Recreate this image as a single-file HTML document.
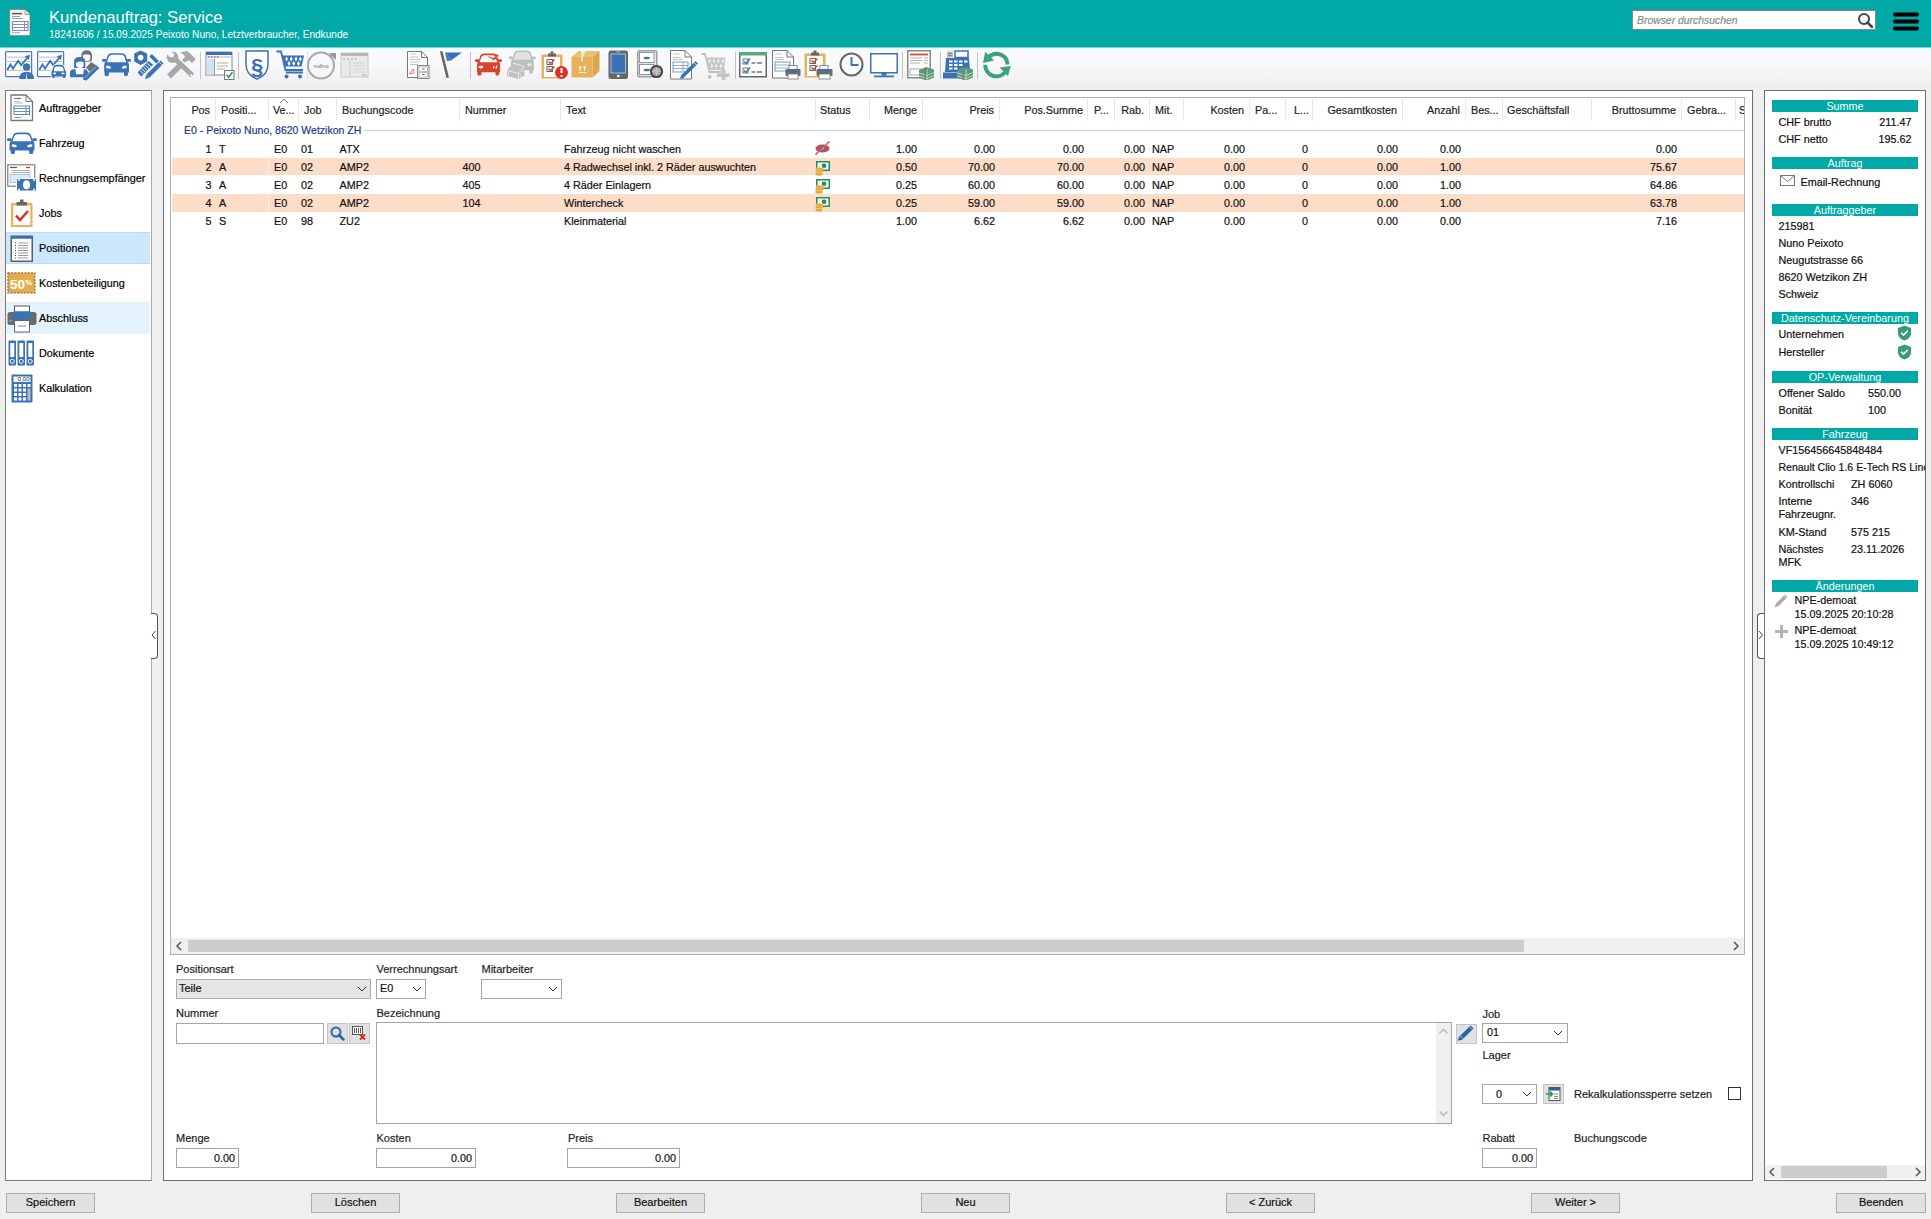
<!DOCTYPE html><html><head><meta charset="utf-8"><style>
html,body{margin:0;padding:0;width:1931px;height:1219px;overflow:hidden;background:#f0eff0;font-family:"Liberation Sans", sans-serif}
.a{position:absolute}
.t{position:absolute;white-space:nowrap;-webkit-text-stroke:0.2px currentColor}
</style></head><body>
<div class="a" style="left:0px;top:0px;width:1931px;height:47px;background:#00a9a5"></div>
<svg class="a" style="left:9px;top:9px" width="22" height="27" viewBox="0 0 22 27"><path d="M0.75 0.5H16L21 5.5V26.4H0.75Z" fill="#fff" stroke="#7a6a6a" stroke-width="0.6"/>
<path d="M16 0.5V5.5H21" fill="#e4e4e4" stroke="#888" stroke-width="0.8"/>
<rect x="3" y="3.8" width="10" height="1.6" fill="#555"/>
<rect x="3" y="7" width="8" height="1" fill="#999"/><rect x="3" y="9" width="11" height="1" fill="#999"/>
<rect x="3.5" y="12.5" width="15.5" height="9" fill="#fff" stroke="#7f8fb5" stroke-width="1.2"/>
<path d="M3.5 15.5H19M3.5 18.5H19M15.5 12.5V21.5" stroke="#7f8fb5" stroke-width="1"/>
<rect x="3" y="23.2" width="8" height="1" fill="#aaa"/></svg>
<div class="t" style="left:49px;top:10px;font-size:16.6px;line-height:16.6px;color:#fff;-webkit-text-stroke:0">Kundenauftrag: Service</div>
<div class="t" style="left:49px;top:30px;font-size:10.1px;line-height:10.1px;color:#fff;-webkit-text-stroke:0">18241606 / 15.09.2025 Peixoto Nuno, Letztverbraucher, Endkunde</div>
<div class="a" style="left:1632px;top:10px;width:244px;height:20px;background:#fff;border:1px solid #888;box-sizing:border-box"></div>
<div class="t" style="left:1637px;top:16px;font-size:10.4px;line-height:10.4px;color:#8a8a8a;font-style:italic">Browser durchsuchen</div>
<svg class="a" style="left:1857px;top:12px" width="17" height="16" viewBox="0 0 17 16"><circle cx="7" cy="7" r="5" fill="none" stroke="#444" stroke-width="2"/><path d="M10.5 10.5l4.5 4.5" stroke="#444" stroke-width="2.5" stroke-linecap="round"/></svg>
<svg class="a" style="left:1892px;top:11px" width="29" height="22" viewBox="0 0 29 22"><g stroke="#000" stroke-width="4" stroke-linecap="round"><path d="M3 3.5h22M3 10.5h22M3 17.5h22"/></g></svg>
<div class="a" style="left:0px;top:47px;width:1931px;height:43px;background:linear-gradient(#fbfafd,#f8f7f9 40%,#f3f2f4 75%,#eeedef)"></div>
<div class="a" style="left:0px;top:47px;width:1931px;height:1px;background:#7fcfcb"></div>
<div class="a" style="left:0px;top:48px;width:1931px;height:1px;background:#e6fdfb"></div>
<div class="a" style="left:0px;top:90px;width:1931px;height:1129px;background:#f0eff0"></div>
<div class="a" style="left:5px;top:90px;width:147px;height:1091px;background:#fff;border:1px solid #7c7c7c;border-right-color:#a9a9ab;box-sizing:border-box"></div>
<div class="a" style="left:163px;top:90px;width:1590px;height:1091px;background:#fff;border:1px solid #6e6e6e;box-sizing:border-box"></div>
<div class="a" style="left:1764px;top:90px;width:162px;height:1091px;background:#fff;border:1px solid #6e6e6e;box-sizing:border-box"></div>
<div class="a" style="left:152px;top:90px;width:11px;height:1091px;background:#f0eff0"></div>
<div class="a" style="left:6px;top:232px;width:144px;height:32px;background:#cce8ff;border-top:1px solid #b6dcf8;border-bottom:1px solid #b6dcf8;box-sizing:border-box"></div>
<div class="a" style="left:6px;top:302px;width:144px;height:32px;background:#e5f3ff"></div>
<div class="t" style="left:39px;top:103px;font-size:10.8px;line-height:10.8px;color:#000;">Auftraggeber</div>
<div class="t" style="left:39px;top:138px;font-size:10.8px;line-height:10.8px;color:#000;">Fahrzeug</div>
<div class="t" style="left:39px;top:173px;font-size:10.8px;line-height:10.8px;color:#000;">Rechnungsempfänger</div>
<div class="t" style="left:39px;top:208px;font-size:10.8px;line-height:10.8px;color:#000;">Jobs</div>
<div class="t" style="left:39px;top:243px;font-size:10.8px;line-height:10.8px;color:#000;">Positionen</div>
<div class="t" style="left:39px;top:278px;font-size:10.8px;line-height:10.8px;color:#000;">Kostenbeteiligung</div>
<div class="t" style="left:39px;top:313px;font-size:10.8px;line-height:10.8px;color:#000;">Abschluss</div>
<div class="t" style="left:39px;top:348px;font-size:10.8px;line-height:10.8px;color:#000;">Dokumente</div>
<div class="t" style="left:39px;top:383px;font-size:10.8px;line-height:10.8px;color:#000;">Kalkulation</div>
<div class="a" style="left:170px;top:97px;width:1575px;height:858px;border:1px solid #b2b2b4;box-sizing:border-box;background:#fff"></div>
<div class="a" style="left:215px;top:99px;width:1px;height:22px;background:#e8e8e8"></div>
<div class="a" style="left:268px;top:99px;width:1px;height:22px;background:#e8e8e8"></div>
<div class="a" style="left:298px;top:99px;width:1px;height:22px;background:#e8e8e8"></div>
<div class="a" style="left:336px;top:99px;width:1px;height:22px;background:#e8e8e8"></div>
<div class="a" style="left:459px;top:99px;width:1px;height:22px;background:#e8e8e8"></div>
<div class="a" style="left:560px;top:99px;width:1px;height:22px;background:#e8e8e8"></div>
<div class="a" style="left:815px;top:99px;width:1px;height:22px;background:#e8e8e8"></div>
<div class="a" style="left:869px;top:99px;width:1px;height:22px;background:#e8e8e8"></div>
<div class="a" style="left:922px;top:99px;width:1px;height:22px;background:#e8e8e8"></div>
<div class="a" style="left:999px;top:99px;width:1px;height:22px;background:#e8e8e8"></div>
<div class="a" style="left:1087px;top:99px;width:1px;height:22px;background:#e8e8e8"></div>
<div class="a" style="left:1114px;top:99px;width:1px;height:22px;background:#e8e8e8"></div>
<div class="a" style="left:1149px;top:99px;width:1px;height:22px;background:#e8e8e8"></div>
<div class="a" style="left:1183px;top:99px;width:1px;height:22px;background:#e8e8e8"></div>
<div class="a" style="left:1249px;top:99px;width:1px;height:22px;background:#e8e8e8"></div>
<div class="a" style="left:1285px;top:99px;width:1px;height:22px;background:#e8e8e8"></div>
<div class="a" style="left:1312px;top:99px;width:1px;height:22px;background:#e8e8e8"></div>
<div class="a" style="left:1402px;top:99px;width:1px;height:22px;background:#e8e8e8"></div>
<div class="a" style="left:1465px;top:99px;width:1px;height:22px;background:#e8e8e8"></div>
<div class="a" style="left:1502px;top:99px;width:1px;height:22px;background:#e8e8e8"></div>
<div class="a" style="left:1591px;top:99px;width:1px;height:22px;background:#e8e8e8"></div>
<div class="a" style="left:1681px;top:99px;width:1px;height:22px;background:#e8e8e8"></div>
<div class="a" style="left:1735px;top:99px;width:1px;height:22px;background:#e8e8e8"></div>
<div class="t" style="left:-190px;width:400px;text-align:right;top:105px;font-size:10.8px;line-height:10.8px;color:#1e1e1e;">Pos</div>
<div class="t" style="left:221px;top:105px;font-size:10.8px;line-height:10.8px;color:#1e1e1e;">Positi...</div>
<div class="t" style="left:273px;top:105px;font-size:10.8px;line-height:10.8px;color:#1e1e1e;">Ve...</div>
<div class="t" style="left:304px;top:105px;font-size:10.8px;line-height:10.8px;color:#1e1e1e;">Job</div>
<div class="t" style="left:342px;top:105px;font-size:10.8px;line-height:10.8px;color:#1e1e1e;">Buchungscode</div>
<div class="t" style="left:465px;top:105px;font-size:10.8px;line-height:10.8px;color:#1e1e1e;">Nummer</div>
<div class="t" style="left:566px;top:105px;font-size:10.8px;line-height:10.8px;color:#1e1e1e;">Text</div>
<div class="t" style="left:820px;top:105px;font-size:10.8px;line-height:10.8px;color:#1e1e1e;">Status</div>
<div class="t" style="left:517px;width:400px;text-align:right;top:105px;font-size:10.8px;line-height:10.8px;color:#1e1e1e;">Menge</div>
<div class="t" style="left:594px;width:400px;text-align:right;top:105px;font-size:10.8px;line-height:10.8px;color:#1e1e1e;">Preis</div>
<div class="t" style="left:683px;width:400px;text-align:right;top:105px;font-size:10.8px;line-height:10.8px;color:#1e1e1e;">Pos.Summe</div>
<div class="t" style="left:1094px;top:105px;font-size:10.8px;line-height:10.8px;color:#1e1e1e;">P...</div>
<div class="t" style="left:744px;width:400px;text-align:right;top:105px;font-size:10.8px;line-height:10.8px;color:#1e1e1e;">Rab.</div>
<div class="t" style="left:1155px;top:105px;font-size:10.8px;line-height:10.8px;color:#1e1e1e;">Mit.</div>
<div class="t" style="left:844px;width:400px;text-align:right;top:105px;font-size:10.8px;line-height:10.8px;color:#1e1e1e;">Kosten</div>
<div class="t" style="left:1255px;top:105px;font-size:10.8px;line-height:10.8px;color:#1e1e1e;">Pa...</div>
<div class="t" style="left:1294px;top:105px;font-size:10.8px;line-height:10.8px;color:#1e1e1e;">L...</div>
<div class="t" style="left:997px;width:400px;text-align:right;top:105px;font-size:10.8px;line-height:10.8px;color:#1e1e1e;">Gesamtkosten</div>
<div class="t" style="left:1060px;width:400px;text-align:right;top:105px;font-size:10.8px;line-height:10.8px;color:#1e1e1e;">Anzahl</div>
<div class="t" style="left:1471px;top:105px;font-size:10.8px;line-height:10.8px;color:#1e1e1e;">Bes...</div>
<div class="t" style="left:1507px;top:105px;font-size:10.8px;line-height:10.8px;color:#1e1e1e;">Geschäftsfall</div>
<div class="t" style="left:1276px;width:400px;text-align:right;top:105px;font-size:10.8px;line-height:10.8px;color:#1e1e1e;">Bruttosumme</div>
<div class="t" style="left:1687px;top:105px;font-size:10.8px;line-height:10.8px;color:#1e1e1e;">Gebra...</div>
<div class="a" style="left:1739px;top:100px;width:5px;height:20px;overflow:hidden">
<div class="t" style="left:0px;top:5px;font-size:10.8px;line-height:10.8px;color:#1e1e1e;">S</div>
</div>
<svg class="a" style="left:279px;top:98px" width="10" height="6" viewBox="0 0 10 6"><path d="M1 5l4-4 4 4" fill="none" stroke="#777" stroke-width="1"/></svg>
<div class="t" style="left:184px;top:125px;font-size:10.5px;line-height:10.5px;color:#1b3a8c;">E0 - Peixoto Nuno, 8620 Wetzikon ZH</div>
<div class="a" style="left:364px;top:130px;width:1380px;height:1px;background:#ccd3de"></div>
<div class="a" style="left:172px;top:158px;width:1572px;height:17px;background:#fddcc8"></div>
<div class="a" style="left:268px;top:158px;width:1px;height:17px;background:#fff3ec"></div>
<div class="a" style="left:172px;top:194px;width:1572px;height:18px;background:#fddcc8"></div>
<div class="a" style="left:268px;top:194px;width:1px;height:18px;background:#fff3ec"></div>
<div class="t" style="left:-188.5px;width:400px;text-align:right;top:144px;font-size:10.8px;line-height:10.8px;color:#111;">1</div>
<div class="t" style="left:219px;top:144px;font-size:10.8px;line-height:10.8px;color:#111;">T</div>
<div class="t" style="left:274px;top:144px;font-size:10.8px;line-height:10.8px;color:#111;">E0</div>
<div class="t" style="left:301px;top:144px;font-size:10.8px;line-height:10.8px;color:#111;">01</div>
<div class="t" style="left:339.5px;top:144px;font-size:10.8px;line-height:10.8px;color:#111;">ATX</div>
<div class="t" style="left:462.5px;top:144px;font-size:10.8px;line-height:10.8px;color:#111;"></div>
<div class="t" style="left:564px;top:144px;font-size:10.8px;line-height:10.8px;color:#111;">Fahrzeug nicht waschen</div>
<div class="t" style="left:517px;width:400px;text-align:right;top:144px;font-size:10.8px;line-height:10.8px;color:#111;">1.00</div>
<div class="t" style="left:595px;width:400px;text-align:right;top:144px;font-size:10.8px;line-height:10.8px;color:#111;">0.00</div>
<div class="t" style="left:684px;width:400px;text-align:right;top:144px;font-size:10.8px;line-height:10.8px;color:#111;">0.00</div>
<div class="t" style="left:745px;width:400px;text-align:right;top:144px;font-size:10.8px;line-height:10.8px;color:#111;">0.00</div>
<div class="t" style="left:1152px;top:144px;font-size:10.8px;line-height:10.8px;color:#111;">NAP</div>
<div class="t" style="left:845px;width:400px;text-align:right;top:144px;font-size:10.8px;line-height:10.8px;color:#111;">0.00</div>
<div class="t" style="left:908px;width:400px;text-align:right;top:144px;font-size:10.8px;line-height:10.8px;color:#111;">0</div>
<div class="t" style="left:998px;width:400px;text-align:right;top:144px;font-size:10.8px;line-height:10.8px;color:#111;">0.00</div>
<div class="t" style="left:1061px;width:400px;text-align:right;top:144px;font-size:10.8px;line-height:10.8px;color:#111;">0.00</div>
<div class="t" style="left:1277px;width:400px;text-align:right;top:144px;font-size:10.8px;line-height:10.8px;color:#111;">0.00</div>
<div class="t" style="left:-188.5px;width:400px;text-align:right;top:162px;font-size:10.8px;line-height:10.8px;color:#111;">2</div>
<div class="t" style="left:219px;top:162px;font-size:10.8px;line-height:10.8px;color:#111;">A</div>
<div class="t" style="left:274px;top:162px;font-size:10.8px;line-height:10.8px;color:#111;">E0</div>
<div class="t" style="left:301px;top:162px;font-size:10.8px;line-height:10.8px;color:#111;">02</div>
<div class="t" style="left:339.5px;top:162px;font-size:10.8px;line-height:10.8px;color:#111;">AMP2</div>
<div class="t" style="left:462.5px;top:162px;font-size:10.8px;line-height:10.8px;color:#111;">400</div>
<div class="t" style="left:564px;top:162px;font-size:10.8px;line-height:10.8px;color:#111;">4 Radwechsel inkl. 2 Räder auswuchten</div>
<div class="t" style="left:517px;width:400px;text-align:right;top:162px;font-size:10.8px;line-height:10.8px;color:#111;">0.50</div>
<div class="t" style="left:595px;width:400px;text-align:right;top:162px;font-size:10.8px;line-height:10.8px;color:#111;">70.00</div>
<div class="t" style="left:684px;width:400px;text-align:right;top:162px;font-size:10.8px;line-height:10.8px;color:#111;">70.00</div>
<div class="t" style="left:745px;width:400px;text-align:right;top:162px;font-size:10.8px;line-height:10.8px;color:#111;">0.00</div>
<div class="t" style="left:1152px;top:162px;font-size:10.8px;line-height:10.8px;color:#111;">NAP</div>
<div class="t" style="left:845px;width:400px;text-align:right;top:162px;font-size:10.8px;line-height:10.8px;color:#111;">0.00</div>
<div class="t" style="left:908px;width:400px;text-align:right;top:162px;font-size:10.8px;line-height:10.8px;color:#111;">0</div>
<div class="t" style="left:998px;width:400px;text-align:right;top:162px;font-size:10.8px;line-height:10.8px;color:#111;">0.00</div>
<div class="t" style="left:1061px;width:400px;text-align:right;top:162px;font-size:10.8px;line-height:10.8px;color:#111;">1.00</div>
<div class="t" style="left:1277px;width:400px;text-align:right;top:162px;font-size:10.8px;line-height:10.8px;color:#111;">75.67</div>
<div class="t" style="left:-188.5px;width:400px;text-align:right;top:180px;font-size:10.8px;line-height:10.8px;color:#111;">3</div>
<div class="t" style="left:219px;top:180px;font-size:10.8px;line-height:10.8px;color:#111;">A</div>
<div class="t" style="left:274px;top:180px;font-size:10.8px;line-height:10.8px;color:#111;">E0</div>
<div class="t" style="left:301px;top:180px;font-size:10.8px;line-height:10.8px;color:#111;">02</div>
<div class="t" style="left:339.5px;top:180px;font-size:10.8px;line-height:10.8px;color:#111;">AMP2</div>
<div class="t" style="left:462.5px;top:180px;font-size:10.8px;line-height:10.8px;color:#111;">405</div>
<div class="t" style="left:564px;top:180px;font-size:10.8px;line-height:10.8px;color:#111;">4 Räder Einlagern</div>
<div class="t" style="left:517px;width:400px;text-align:right;top:180px;font-size:10.8px;line-height:10.8px;color:#111;">0.25</div>
<div class="t" style="left:595px;width:400px;text-align:right;top:180px;font-size:10.8px;line-height:10.8px;color:#111;">60.00</div>
<div class="t" style="left:684px;width:400px;text-align:right;top:180px;font-size:10.8px;line-height:10.8px;color:#111;">60.00</div>
<div class="t" style="left:745px;width:400px;text-align:right;top:180px;font-size:10.8px;line-height:10.8px;color:#111;">0.00</div>
<div class="t" style="left:1152px;top:180px;font-size:10.8px;line-height:10.8px;color:#111;">NAP</div>
<div class="t" style="left:845px;width:400px;text-align:right;top:180px;font-size:10.8px;line-height:10.8px;color:#111;">0.00</div>
<div class="t" style="left:908px;width:400px;text-align:right;top:180px;font-size:10.8px;line-height:10.8px;color:#111;">0</div>
<div class="t" style="left:998px;width:400px;text-align:right;top:180px;font-size:10.8px;line-height:10.8px;color:#111;">0.00</div>
<div class="t" style="left:1061px;width:400px;text-align:right;top:180px;font-size:10.8px;line-height:10.8px;color:#111;">1.00</div>
<div class="t" style="left:1277px;width:400px;text-align:right;top:180px;font-size:10.8px;line-height:10.8px;color:#111;">64.86</div>
<div class="t" style="left:-188.5px;width:400px;text-align:right;top:198px;font-size:10.8px;line-height:10.8px;color:#111;">4</div>
<div class="t" style="left:219px;top:198px;font-size:10.8px;line-height:10.8px;color:#111;">A</div>
<div class="t" style="left:274px;top:198px;font-size:10.8px;line-height:10.8px;color:#111;">E0</div>
<div class="t" style="left:301px;top:198px;font-size:10.8px;line-height:10.8px;color:#111;">02</div>
<div class="t" style="left:339.5px;top:198px;font-size:10.8px;line-height:10.8px;color:#111;">AMP2</div>
<div class="t" style="left:462.5px;top:198px;font-size:10.8px;line-height:10.8px;color:#111;">104</div>
<div class="t" style="left:564px;top:198px;font-size:10.8px;line-height:10.8px;color:#111;">Wintercheck</div>
<div class="t" style="left:517px;width:400px;text-align:right;top:198px;font-size:10.8px;line-height:10.8px;color:#111;">0.25</div>
<div class="t" style="left:595px;width:400px;text-align:right;top:198px;font-size:10.8px;line-height:10.8px;color:#111;">59.00</div>
<div class="t" style="left:684px;width:400px;text-align:right;top:198px;font-size:10.8px;line-height:10.8px;color:#111;">59.00</div>
<div class="t" style="left:745px;width:400px;text-align:right;top:198px;font-size:10.8px;line-height:10.8px;color:#111;">0.00</div>
<div class="t" style="left:1152px;top:198px;font-size:10.8px;line-height:10.8px;color:#111;">NAP</div>
<div class="t" style="left:845px;width:400px;text-align:right;top:198px;font-size:10.8px;line-height:10.8px;color:#111;">0.00</div>
<div class="t" style="left:908px;width:400px;text-align:right;top:198px;font-size:10.8px;line-height:10.8px;color:#111;">0</div>
<div class="t" style="left:998px;width:400px;text-align:right;top:198px;font-size:10.8px;line-height:10.8px;color:#111;">0.00</div>
<div class="t" style="left:1061px;width:400px;text-align:right;top:198px;font-size:10.8px;line-height:10.8px;color:#111;">1.00</div>
<div class="t" style="left:1277px;width:400px;text-align:right;top:198px;font-size:10.8px;line-height:10.8px;color:#111;">63.78</div>
<div class="t" style="left:-188.5px;width:400px;text-align:right;top:216px;font-size:10.8px;line-height:10.8px;color:#111;">5</div>
<div class="t" style="left:219px;top:216px;font-size:10.8px;line-height:10.8px;color:#111;">S</div>
<div class="t" style="left:274px;top:216px;font-size:10.8px;line-height:10.8px;color:#111;">E0</div>
<div class="t" style="left:301px;top:216px;font-size:10.8px;line-height:10.8px;color:#111;">98</div>
<div class="t" style="left:339.5px;top:216px;font-size:10.8px;line-height:10.8px;color:#111;">ZU2</div>
<div class="t" style="left:462.5px;top:216px;font-size:10.8px;line-height:10.8px;color:#111;"></div>
<div class="t" style="left:564px;top:216px;font-size:10.8px;line-height:10.8px;color:#111;">Kleinmaterial</div>
<div class="t" style="left:517px;width:400px;text-align:right;top:216px;font-size:10.8px;line-height:10.8px;color:#111;">1.00</div>
<div class="t" style="left:595px;width:400px;text-align:right;top:216px;font-size:10.8px;line-height:10.8px;color:#111;">6.62</div>
<div class="t" style="left:684px;width:400px;text-align:right;top:216px;font-size:10.8px;line-height:10.8px;color:#111;">6.62</div>
<div class="t" style="left:745px;width:400px;text-align:right;top:216px;font-size:10.8px;line-height:10.8px;color:#111;">0.00</div>
<div class="t" style="left:1152px;top:216px;font-size:10.8px;line-height:10.8px;color:#111;">NAP</div>
<div class="t" style="left:845px;width:400px;text-align:right;top:216px;font-size:10.8px;line-height:10.8px;color:#111;">0.00</div>
<div class="t" style="left:908px;width:400px;text-align:right;top:216px;font-size:10.8px;line-height:10.8px;color:#111;">0</div>
<div class="t" style="left:998px;width:400px;text-align:right;top:216px;font-size:10.8px;line-height:10.8px;color:#111;">0.00</div>
<div class="t" style="left:1061px;width:400px;text-align:right;top:216px;font-size:10.8px;line-height:10.8px;color:#111;">0.00</div>
<div class="t" style="left:1277px;width:400px;text-align:right;top:216px;font-size:10.8px;line-height:10.8px;color:#111;">7.16</div>
<div class="a" style="left:171px;top:938px;width:1573px;height:16px;background:#f0f0f0"></div>
<div class="a" style="left:188px;top:940px;width:1336px;height:12px;background:#cdcdcd"></div>
<svg class="a" style="left:175px;top:941px" width="8" height="10" viewBox="0 0 8 10"><path d="M6 1L2 5l4 4" fill="none" stroke="#555" stroke-width="1.5"/></svg>
<svg class="a" style="left:1732px;top:941px" width="8" height="10" viewBox="0 0 8 10"><path d="M2 1l4 4-4 4" fill="none" stroke="#555" stroke-width="1.5"/></svg>
<div class="a" style="left:151px;top:613px;width:6px;height:44px;border:1px solid #555;border-left:none;border-radius:0 4px 4px 0;background:#fff"></div>
<svg class="a" style="left:151px;top:630px" width="6" height="10" viewBox="0 0 6 10"><path d="M4.5 1L1 5l3.5 4" fill="none" stroke="#444" stroke-width="1"/></svg>
<div class="a" style="left:1757px;top:613px;width:6px;height:44px;border:1px solid #555;border-right:none;border-radius:4px 0 0 4px;background:#fff"></div>
<svg class="a" style="left:1758px;top:630px" width="6" height="10" viewBox="0 0 6 10"><path d="M1 1l3.5 4L1 9" fill="none" stroke="#444" stroke-width="1"/></svg>
<div class="t" style="left:176px;top:964px;font-size:11px;line-height:11px;color:#1e1e1e;">Positionsart</div>
<div class="a" style="left:176px;top:979px;width:195px;height:20px;background:#e5e5e5;border:1px solid #adadad;box-sizing:border-box"></div>
<div class="t" style="left:179px;top:983px;font-size:11px;line-height:11px;color:#111;">Teile</div>
<svg class="a" style="left:357px;top:986px" width="10" height="6" viewBox="0 0 10 6"><path d="M1 1l4 4 4-4" fill="none" stroke="#333" stroke-width="1"/></svg>
<div class="t" style="left:376.5px;top:964px;font-size:11px;line-height:11px;color:#1e1e1e;">Verrechnungsart</div>
<div class="a" style="left:376px;top:979px;width:50px;height:20px;background:#fff;border:1px solid #a5a5a5;box-sizing:border-box;"></div>
<div class="t" style="left:380px;top:983px;font-size:10.8px;line-height:10.8px;color:#111;">E0</div>
<svg class="a" style="left:412px;top:986px" width="10" height="6" viewBox="0 0 10 6"><path d="M1 1l4 4 4-4" fill="none" stroke="#333" stroke-width="1"/></svg>
<div class="t" style="left:481.5px;top:964px;font-size:11px;line-height:11px;color:#1e1e1e;">Mitarbeiter</div>
<div class="a" style="left:481px;top:979px;width:81px;height:20px;background:#fff;border:1px solid #a5a5a5;box-sizing:border-box;"></div>
<svg class="a" style="left:548px;top:986px" width="10" height="6" viewBox="0 0 10 6"><path d="M1 1l4 4 4-4" fill="none" stroke="#333" stroke-width="1"/></svg>
<div class="t" style="left:176px;top:1008px;font-size:11px;line-height:11px;color:#1e1e1e;">Nummer</div>
<div class="a" style="left:176px;top:1023px;width:148px;height:21px;background:#fff;border:1px solid #a5a5a5;box-sizing:border-box;"></div>
<div class="a" style="left:327px;top:1023px;width:21px;height:21px;background:#e1e1e1;border:1px solid #c5c5c5;box-sizing:border-box"></div>
<svg class="a" style="left:329px;top:1025px" width="17" height="17" viewBox="0 0 17 17"><circle cx="7" cy="7" r="4.5" fill="none" stroke="#2a64a8" stroke-width="2"/><path d="M10 10l4.5 4.5" stroke="#2a64a8" stroke-width="2.5" stroke-linecap="round"/></svg>
<div class="a" style="left:349px;top:1023px;width:21px;height:21px;background:#e1e1e1;border:1px solid #c5c5c5;box-sizing:border-box"></div>
<svg class="a" style="left:351px;top:1025px" width="17" height="17" viewBox="0 0 17 17"><rect x="1.5" y="1.5" width="10" height="8" fill="#fff" stroke="#555"/><path d="M3.5 3v5M5.5 3v5M7.5 3v5M9.5 3v5" stroke="#555"/><path d="M9 9.5l5 5M14 9.5l-5 5" stroke="#d22" stroke-width="1.8"/></svg>
<div class="t" style="left:376.5px;top:1008px;font-size:11px;line-height:11px;color:#1e1e1e;">Bezeichnung</div>
<div class="a" style="left:376px;top:1022px;width:1076px;height:102px;background:#fff;border:1px solid #a5a5a5;box-sizing:border-box;"></div>
<div class="a" style="left:1436px;top:1023px;width:15px;height:100px;background:#f0eff1"></div>
<svg class="a" style="left:1438px;top:1027px" width="11" height="8" viewBox="0 0 11 8"><path d="M1.5 6.5l4-4 4 4" fill="none" stroke="#bdbdbd" stroke-width="1.6"/></svg>
<svg class="a" style="left:1438px;top:1110px" width="11" height="8" viewBox="0 0 11 8"><path d="M1.5 1.5l4 4 4-4" fill="none" stroke="#bdbdbd" stroke-width="1.6"/></svg>
<div class="a" style="left:1456px;top:1024px;width:21px;height:20px;background:#e1e1e1;border:1px solid #c5c5c5;box-sizing:border-box"></div>
<svg class="a" style="left:1456px;top:1024px" width="20" height="20" viewBox="0 0 20 20"><path d="M1.7 16.8L3.2 12.8L14.5 1.5L17.5 4.5L6.2 15.8Z" fill="#2a64a8"/><path d="M13.3 2.7l3 3M4.2 11.8l3 3" stroke="#e6eef8" stroke-width="0.7"/></svg>
<div class="t" style="left:1482.5px;top:1009px;font-size:11px;line-height:11px;color:#1e1e1e;">Job</div>
<div class="a" style="left:1482px;top:1023px;width:86px;height:20px;background:#fff;border:1px solid #a5a5a5;box-sizing:border-box;"></div>
<div class="t" style="left:1487px;top:1027px;font-size:10.8px;line-height:10.8px;color:#111;">01</div>
<svg class="a" style="left:1553px;top:1030px" width="10" height="6" viewBox="0 0 10 6"><path d="M1 1l4 4 4-4" fill="none" stroke="#333" stroke-width="1"/></svg>
<div class="t" style="left:1482.5px;top:1050px;font-size:11px;line-height:11px;color:#1e1e1e;">Lager</div>
<div class="a" style="left:1482px;top:1084px;width:55px;height:20px;background:#fff;border:1px solid #a5a5a5;box-sizing:border-box;"></div>
<div class="t" style="left:1496px;top:1089px;font-size:10.8px;line-height:10.8px;color:#111;">0</div>
<svg class="a" style="left:1522px;top:1091px" width="10" height="6" viewBox="0 0 10 6"><path d="M1 1l4 4 4-4" fill="none" stroke="#333" stroke-width="1"/></svg>
<div class="a" style="left:1543px;top:1084px;width:21px;height:20px;background:#e1e1e1;border:1px solid #c5c5c5;box-sizing:border-box"></div>
<svg class="a" style="left:1545px;top:1086px" width="17" height="16" viewBox="0 0 17 16"><rect x="4" y="1.5" width="11" height="13" fill="#fff" stroke="#555"/><rect x="4" y="1.5" width="11" height="3" fill="#2a64a8"/><path d="M1 8h6M5 5.5l2.5 2.5L5 10.5" fill="none" stroke="#1a9a5a" stroke-width="1.6"/><path d="M9 8h4M9 10.5h4M9 12.5h4" stroke="#888"/></svg>
<div class="t" style="left:1574px;top:1089px;font-size:11px;line-height:11px;color:#1e1e1e;">Rekalkulationssperre setzen</div>
<div class="a" style="left:1728px;top:1087px;width:13px;height:13px;background:#fff;border:1px solid #333;box-sizing:border-box"></div>
<div class="t" style="left:176px;top:1133px;font-size:11px;line-height:11px;color:#1e1e1e;">Menge</div>
<div class="a" style="left:176px;top:1148px;width:63px;height:20px;background:#fff;border:1px solid #a5a5a5;box-sizing:border-box;"></div>
<div class="t" style="left:-165px;width:400px;text-align:right;top:1153px;font-size:10.8px;line-height:10.8px;color:#111;">0.00</div>
<div class="t" style="left:376.5px;top:1133px;font-size:11px;line-height:11px;color:#1e1e1e;">Kosten</div>
<div class="a" style="left:376px;top:1148px;width:100px;height:20px;background:#fff;border:1px solid #a5a5a5;box-sizing:border-box;"></div>
<div class="t" style="left:72px;width:400px;text-align:right;top:1153px;font-size:10.8px;line-height:10.8px;color:#111;">0.00</div>
<div class="t" style="left:568px;top:1133px;font-size:11px;line-height:11px;color:#1e1e1e;">Preis</div>
<div class="a" style="left:567px;top:1148px;width:113px;height:20px;background:#fff;border:1px solid #a5a5a5;box-sizing:border-box;"></div>
<div class="t" style="left:276px;width:400px;text-align:right;top:1153px;font-size:10.8px;line-height:10.8px;color:#111;">0.00</div>
<div class="t" style="left:1482.5px;top:1133px;font-size:11px;line-height:11px;color:#1e1e1e;">Rabatt</div>
<div class="a" style="left:1482px;top:1148px;width:55px;height:20px;background:#fff;border:1px solid #a5a5a5;box-sizing:border-box;"></div>
<div class="t" style="left:1133px;width:400px;text-align:right;top:1153px;font-size:10.8px;line-height:10.8px;color:#111;">0.00</div>
<div class="t" style="left:1574px;top:1133px;font-size:11px;line-height:11px;color:#1e1e1e;">Buchungscode</div>
<div class="a" style="left:6px;top:1193px;width:89px;height:20px;background:#e1e1e1;border:1px solid #adadad;box-sizing:border-box"></div>
<div class="t" style="left:-9.5px;width:120px;text-align:center;top:1197px;font-size:11px;line-height:11px;color:#111;">Speichern</div>
<div class="a" style="left:311px;top:1193px;width:89px;height:20px;background:#e1e1e1;border:1px solid #adadad;box-sizing:border-box"></div>
<div class="t" style="left:295.5px;width:120px;text-align:center;top:1197px;font-size:11px;line-height:11px;color:#111;">Löschen</div>
<div class="a" style="left:616px;top:1193px;width:89px;height:20px;background:#e1e1e1;border:1px solid #adadad;box-sizing:border-box"></div>
<div class="t" style="left:600.5px;width:120px;text-align:center;top:1197px;font-size:11px;line-height:11px;color:#111;">Bearbeiten</div>
<div class="a" style="left:921px;top:1193px;width:89px;height:20px;background:#e1e1e1;border:1px solid #adadad;box-sizing:border-box"></div>
<div class="t" style="left:905.5px;width:120px;text-align:center;top:1197px;font-size:11px;line-height:11px;color:#111;">Neu</div>
<div class="a" style="left:1226px;top:1193px;width:89px;height:20px;background:#e1e1e1;border:1px solid #adadad;box-sizing:border-box"></div>
<div class="t" style="left:1210.5px;width:120px;text-align:center;top:1197px;font-size:11px;line-height:11px;color:#111;">&lt; Zurück</div>
<div class="a" style="left:1531px;top:1193px;width:89px;height:20px;background:#e1e1e1;border:1px solid #adadad;box-sizing:border-box"></div>
<div class="t" style="left:1515.5px;width:120px;text-align:center;top:1197px;font-size:11px;line-height:11px;color:#111;">Weiter &gt;</div>
<div class="a" style="left:1836px;top:1193px;width:90px;height:20px;background:#e1e1e1;border:1px solid #adadad;box-sizing:border-box"></div>
<div class="t" style="left:1821.0px;width:120px;text-align:center;top:1197px;font-size:11px;line-height:11px;color:#111;">Beenden</div>
<div class="a" style="left:1772px;top:100px;width:146px;height:12px;background:#00a9a5"></div>
<div class="t" style="left:1765.0px;width:160px;text-align:center;top:101px;font-size:10.8px;line-height:10.8px;color:#fff;-webkit-text-stroke:0">Summe</div>
<div class="t" style="left:1778.5px;top:117px;font-size:10.8px;line-height:10.8px;color:#111;">CHF brutto</div>
<div class="t" style="left:1511.5px;width:400px;text-align:right;top:117px;font-size:10.8px;line-height:10.8px;color:#111;">211.47</div>
<div class="t" style="left:1778.5px;top:134px;font-size:10.8px;line-height:10.8px;color:#111;">CHF netto</div>
<div class="t" style="left:1511.5px;width:400px;text-align:right;top:134px;font-size:10.8px;line-height:10.8px;color:#111;">195.62</div>
<div class="a" style="left:1772px;top:157px;width:146px;height:12px;background:#00a9a5"></div>
<div class="t" style="left:1765.0px;width:160px;text-align:center;top:158px;font-size:10.8px;line-height:10.8px;color:#fff;-webkit-text-stroke:0">Auftrag</div>
<svg class="a" style="left:1780px;top:175px" width="16" height="12" viewBox="0 0 16 12"><rect x="0.5" y="0.5" width="14" height="10" fill="#fff" stroke="#777"/><path d="M0.5 0.5l7 6 7-6" fill="none" stroke="#777"/></svg>
<div class="t" style="left:1800.5px;top:177px;font-size:10.8px;line-height:10.8px;color:#111;">Email-Rechnung</div>
<div class="a" style="left:1772px;top:204px;width:146px;height:12px;background:#00a9a5"></div>
<div class="t" style="left:1765.0px;width:160px;text-align:center;top:205px;font-size:10.8px;line-height:10.8px;color:#fff;-webkit-text-stroke:0">Auftraggeber</div>
<div class="t" style="left:1778.5px;top:221px;font-size:10.8px;line-height:10.8px;color:#111;">215981</div>
<div class="t" style="left:1778.5px;top:238px;font-size:10.8px;line-height:10.8px;color:#111;">Nuno Peixoto</div>
<div class="t" style="left:1778.5px;top:255px;font-size:10.8px;line-height:10.8px;color:#111;">Neugutstrasse 66</div>
<div class="t" style="left:1778.5px;top:272px;font-size:10.8px;line-height:10.8px;color:#111;">8620 Wetzikon ZH</div>
<div class="t" style="left:1778.5px;top:289px;font-size:10.8px;line-height:10.8px;color:#111;">Schweiz</div>
<div class="a" style="left:1772px;top:312px;width:146px;height:12px;background:#00a9a5"></div>
<div class="t" style="left:1765.0px;width:160px;text-align:center;top:313px;font-size:10.8px;line-height:10.8px;color:#fff;-webkit-text-stroke:0">Datenschutz-Vereinbarung</div>
<div class="t" style="left:1778.5px;top:329px;font-size:10.8px;line-height:10.8px;color:#111;">Unternehmen</div>
<div class="t" style="left:1778.5px;top:347px;font-size:10.8px;line-height:10.8px;color:#111;">Hersteller</div>
<svg class="a" style="left:1897px;top:325px" width="15" height="16" viewBox="0 0 15 16"><path d="M7.5 0.5L14 3v5c0 4-3 6.5-6.5 7.5C4 14.5 1 12 1 8V3z" fill="#3b9a7a"/><path d="M4.2 7.8l2.3 2.3 4.3-4.3" fill="none" stroke="#fff" stroke-width="1.6"/></svg>
<svg class="a" style="left:1897px;top:344px" width="15" height="16" viewBox="0 0 15 16"><path d="M7.5 0.5L14 3v5c0 4-3 6.5-6.5 7.5C4 14.5 1 12 1 8V3z" fill="#3b9a7a"/><path d="M4.2 7.8l2.3 2.3 4.3-4.3" fill="none" stroke="#fff" stroke-width="1.6"/></svg>
<div class="a" style="left:1772px;top:371px;width:146px;height:12px;background:#00a9a5"></div>
<div class="t" style="left:1765.0px;width:160px;text-align:center;top:372px;font-size:10.8px;line-height:10.8px;color:#fff;-webkit-text-stroke:0">OP-Verwaltung</div>
<div class="t" style="left:1778.5px;top:388px;font-size:10.8px;line-height:10.8px;color:#111;">Offener Saldo</div>
<div class="t" style="left:1868px;top:388px;font-size:10.8px;line-height:10.8px;color:#111;">550.00</div>
<div class="t" style="left:1778.5px;top:405px;font-size:10.8px;line-height:10.8px;color:#111;">Bonität</div>
<div class="t" style="left:1868px;top:405px;font-size:10.8px;line-height:10.8px;color:#111;">100</div>
<div class="a" style="left:1772px;top:428px;width:146px;height:12px;background:#00a9a5"></div>
<div class="t" style="left:1765.0px;width:160px;text-align:center;top:429px;font-size:10.8px;line-height:10.8px;color:#fff;-webkit-text-stroke:0">Fahrzeug</div>
<div class="t" style="left:1778.5px;top:445px;font-size:10.8px;line-height:10.8px;color:#111;">VF156456645848484</div>
<div class="a" style="left:1778px;top:455px;width:147px;height:20px;overflow:hidden">
<div class="t" style="left:0.5px;top:7px;font-size:10.5px;line-height:10.5px;color:#111;">Renault Clio 1.6 E-Tech RS Line</div>
</div>
<div class="t" style="left:1778.5px;top:479px;font-size:10.8px;line-height:10.8px;color:#111;">Kontrollschi</div>
<div class="t" style="left:1851px;top:479px;font-size:10.8px;line-height:10.8px;color:#111;">ZH 6060</div>
<div class="t" style="left:1778.5px;top:496px;font-size:10.8px;line-height:10.8px;color:#111;">Interne</div>
<div class="t" style="left:1851px;top:496px;font-size:10.8px;line-height:10.8px;color:#111;">346</div>
<div class="t" style="left:1778.5px;top:509px;font-size:10.8px;line-height:10.8px;color:#111;">Fahrzeugnr.</div>
<div class="t" style="left:1778.5px;top:527px;font-size:10.8px;line-height:10.8px;color:#111;">KM-Stand</div>
<div class="t" style="left:1851px;top:527px;font-size:10.8px;line-height:10.8px;color:#111;">575 215</div>
<div class="t" style="left:1778.5px;top:544px;font-size:10.8px;line-height:10.8px;color:#111;">Nächstes</div>
<div class="t" style="left:1851px;top:544px;font-size:10.8px;line-height:10.8px;color:#111;">23.11.2026</div>
<div class="t" style="left:1778.5px;top:557px;font-size:10.8px;line-height:10.8px;color:#111;">MFK</div>
<div class="a" style="left:1772px;top:580px;width:146px;height:12px;background:#00a9a5"></div>
<div class="t" style="left:1765.0px;width:160px;text-align:center;top:581px;font-size:10.8px;line-height:10.8px;color:#fff;-webkit-text-stroke:0">Änderungen</div>
<svg class="a" style="left:1773px;top:593px" width="16" height="16" viewBox="0 0 16 16"><path d="M1.5 14.5l1.5-4 9-9 2.5 2.5-9 9z" fill="#aaa"/><path d="M11 2.5l2.5 2.5" stroke="#fff" stroke-width="0.8"/></svg>
<div class="t" style="left:1794.5px;top:595px;font-size:10.8px;line-height:10.8px;color:#111;">NPE-demoat</div>
<div class="t" style="left:1794.5px;top:609px;font-size:10.8px;line-height:10.8px;color:#111;">15.09.2025 20:10:28</div>
<svg class="a" style="left:1775px;top:625px" width="13" height="13" viewBox="0 0 13 13"><path d="M6.5 0v13M0 6.5h13" stroke="#b5b5b5" stroke-width="3"/></svg>
<div class="t" style="left:1794.5px;top:625px;font-size:10.8px;line-height:10.8px;color:#111;">NPE-demoat</div>
<div class="t" style="left:1794.5px;top:639px;font-size:10.8px;line-height:10.8px;color:#111;">15.09.2025 10:49:12</div>
<div class="a" style="left:1765px;top:1165px;width:160px;height:14px;background:#f0f0f0"></div>
<div class="a" style="left:1781px;top:1166px;width:106px;height:12px;background:#cdcdcd"></div>
<svg class="a" style="left:1768px;top:1167px" width="8" height="10" viewBox="0 0 8 10"><path d="M6 1L2 5l4 4" fill="none" stroke="#555" stroke-width="1.5"/></svg>
<svg class="a" style="left:1914px;top:1167px" width="8" height="10" viewBox="0 0 8 10"><path d="M2 1l4 4-4 4" fill="none" stroke="#555" stroke-width="1.5"/></svg>
<div class="a" style="left:200px;top:52px;width:1px;height:27px;background:#c4c4c4"></div>
<div class="a" style="left:238px;top:52px;width:1px;height:27px;background:#c4c4c4"></div>
<div class="a" style="left:470px;top:52px;width:1px;height:27px;background:#c4c4c4"></div>
<div class="a" style="left:735px;top:52px;width:1px;height:27px;background:#c4c4c4"></div>
<div class="a" style="left:902px;top:52px;width:1px;height:27px;background:#c4c4c4"></div>
<div class="a" style="left:940px;top:52px;width:1px;height:27px;background:#c4c4c4"></div>
<div class="a" style="left:977px;top:52px;width:1px;height:27px;background:#c4c4c4"></div>
<div class="a" style="left:307px;top:52px;width:1px;height:27px;background:#e2e2e2"></div>
<svg class="a" style="left:5px;top:50px" width="30" height="30" viewBox="0 0 30 30"><rect x="0.6" y="1.6" width="26" height="25" rx="0.8" fill="#fff" stroke="#4f7ab5" stroke-width="1.2"/>
<g stroke="#b4bfcc" stroke-width="1"><path d="M2 7.2h23M2 11.4h23M2 20.3h23"/></g>
<polyline points="2.2,20 5.5,14.5 8,18.6 13.2,10.8 16.1,15.3 23,7" fill="none" stroke="#3a72b6" stroke-width="1.8"/>
<path d="M25 4.8L19.8 6.2L23.8 10Z" fill="#3a72b6"/><circle cx="21.6" cy="17" r="3.7" fill="#3a72b6"/><path d="M14.2 29Q14.2 21.7 21.6 21.7T29 29Z" fill="#3a72b6"/><path d="M21.6 22L20.9 29H22.3Z" fill="#e3ebf5"/></svg>
<svg class="a" style="left:37px;top:50px" width="30" height="30" viewBox="0 0 30 30"><rect x="0.6" y="1.6" width="26" height="25" rx="0.8" fill="#fff" stroke="#4f7ab5" stroke-width="1.2"/>
<g stroke="#b4bfcc" stroke-width="1"><path d="M2 7.2h23M2 11.4h23M2 20.3h23"/></g>
<polyline points="2.2,20 5.5,14.5 8,18.6 13.2,10.8 16.1,15.3 23,7" fill="none" stroke="#3a72b6" stroke-width="1.8"/>
<path d="M25 4.8L19.8 6.2L23.8 10Z" fill="#3a72b6"/><path d="M14.5 26.5V21.8Q14.5 20.8 15.3 20.5L16.3 17Q17 14.7 19.5 14.7H24Q26.5 14.7 27.2 17L28.2 20.5Q29 20.8 29 21.8V26.5H28.3V27.5Q28.3 28.1 27.5 28.1H26.5Q25.8 28.1 25.8 27.5V26.5H17.7V27.5Q17.7 28.1 17 28.1H16Q15.2 28.1 15.2 27.5V26.5Z" fill="#fff" stroke="#fff" stroke-width="1.6"/><path d="M14.5 26.5V21.8Q14.5 20.8 15.3 20.5L16.3 17Q17 14.7 19.5 14.7H24Q26.5 14.7 27.2 17L28.2 20.5Q29 20.8 29 21.8V26.5H28.3V27.5Q28.3 28.1 27.5 28.1H26.5Q25.8 28.1 25.8 27.5V26.5H17.7V27.5Q17.7 28.1 17 28.1H16Q15.2 28.1 15.2 27.5V26.5Z" fill="#3a72b6"/><path d="M16.6 21.2L17.5 17.8Q18 16.4 19.8 16.4H23.7Q25.5 16.4 26 17.8L26.9 21.2Z" fill="#fff"/><ellipse cx="17.6" cy="23.4" rx="1.6" ry="0.9" fill="#fff"/><ellipse cx="25.9" cy="23.4" rx="1.6" ry="0.9" fill="#fff"/></svg>
<svg class="a" style="left:70px;top:50px" width="30" height="31" viewBox="0 0 30 31"><path d="M11.4 6Q11.4 0.2 16.7 0.2T22 6V9Q22 11.7 19 11.7H14.5Q11.4 11.7 11.4 9Z" fill="#707070"/><path d="M13 5.2Q16.5 3.2 20.3 5.2V8.8Q20.3 11.1 16.7 11.1T13 8.8Z" fill="#fff"/>
<path d="M4.1 18V11.5Q4.1 6.9 9.7 6.9T15.3 11.5V18Z" fill="#3a72b6"/><path d="M6.1 12.8Q9.5 10.5 13.6 12V15Q13.6 18 9.85 18T6.1 15Z" fill="#fff"/>
<path d="M0 27.3V23Q0 19.2 4 19.2H14Q18 19.2 18 23V27.3Z" fill="#3a72b6"/><path d="M5.5 19H13.8L13.3 24.3H6Z" fill="#fff"/>
<path d="M16 17.5L21.2 12L26.8 15.8L19.5 21.5Z" fill="#707070"/><path d="M26.5 15.2L29.3 18L16.5 30.5L13 29.8L13.8 27Z" fill="#3a72b6"/><path d="M14.8 27.8L27.5 15.3" stroke="#cfe0f0" stroke-width="0.6"/></svg>
<svg class="a" style="left:102px;top:50px" width="30" height="30" viewBox="0 0 30 30"><path d="M2.2 22.5V15Q2.2 12.5 3.6 12L5.5 6Q6.5 3.2 10 3.2H19.5Q23 3.2 24 6L25.5 12Q27 12.5 27 15V22.5H25.9V24.5Q25.9 26 24.5 26H23.4Q22 26 22 24.5V22.5H6.9V24.5Q6.9 26 5.5 26H4Q2.6 26 2.6 24.5V22.5Z" fill="#3a72b6"/>
<rect x="0" y="9" width="4.5" height="2.8" rx="1.3" fill="#3a72b6"/><rect x="24.5" y="9" width="4.5" height="2.8" rx="1.3" fill="#3a72b6"/>
<path d="M5 12.2L6.8 7Q7.6 4.8 10.5 4.8H19Q21.8 4.8 22.6 7L24 12.2Z" fill="#fff"/><ellipse cx="6.4" cy="17.2" rx="2.6" ry="1.4" fill="#fff" transform="rotate(10 6.4 17.2)"/><ellipse cx="22.3" cy="17.2" rx="2.6" ry="1.4" fill="#fff" transform="rotate(-10 22.3 17.2)"/></svg>
<svg class="a" style="left:134px;top:50px" width="30" height="30" viewBox="0 0 30 30"><path d="M6.6 0.5L13.2 3.6V11.4L6.6 15L0.2 11.4V3.6Z" fill="#3a72b6"/><circle cx="6.6" cy="7.6" r="2.8" fill="#fff"/>
<path d="M15.3 6.4L17.8 4L24.8 11.1L22.3 13.6Z" fill="#3a72b6"/>
<path d="M14.5 11.1L19.2 14.8L7.2 26.5L3.6 22.5Z" fill="#3a72b6"/><g stroke="#fff" stroke-width="0.9"><path d="M13.2 13.3l4 4M11.4 15.1l4 4M9.6 16.9l4 4M7.8 18.7l4 4M6 20.5l4 4"/></g>
<path d="M26.5 10.5L29.5 13.5L15.5 27.5L12.5 24.5Z" fill="#3a72b6"/><path d="M12.5 24.5L15.5 27.5L11 29.3Z" fill="#3a72b6"/><path d="M25 12l3 3" stroke="#fff" stroke-width="0.7"/></svg>
<svg class="a" style="left:166px;top:50px" width="31" height="30" viewBox="0 0 31 30"><circle cx="6.5" cy="7.2" r="5.8" fill="#a8a8a8"/><path d="M0 2.5L4.2 -0.5L8.3 4.5L7 7.6L3.2 6.8Z" fill="#f8f7f9"/>
<path d="M6.2 9.8L9.8 6.2L28.3 23.7L24.7 27.3Z" fill="#a8a8a8"/><rect x="24.3" y="24.2" width="2" height="2" fill="#f2f1f3" transform="rotate(45 25.3 25.2)"/>
<path d="M14 2.8Q18 0.5 22 1.6L29.8 9.2L26 13L23 10.3L18.4 12.5L16 10.3L19.2 6.6Q17 3.5 14 2.8Z" fill="#a8a8a8"/>
<path d="M11.5 14L15.5 18L5 28.5L1 24.5Z" fill="#a8a8a8"/></svg>
<svg class="a" style="left:205px;top:50px" width="30" height="30" viewBox="0 0 30 30"><rect x="1" y="2" width="26" height="23" fill="#fff" stroke="#8a8a8a" stroke-width="1"/><rect x="1" y="2" width="26" height="3" fill="#3a72b6"/>
<path d="M2 7h24" stroke="#ccc" stroke-width="1.5"/><path d="M3 7h1.5M6 7h1.5M9 7h1.5M12 7h1.5" stroke="#555" stroke-width="1.2"/>
<rect x="1.5" y="9" width="8" height="15.5" fill="#cfe4f7"/><path d="M9.5 9v16" stroke="#999"/><path d="M12 13h11M12 16h11M12 19h8" stroke="#aaa"/>
<rect x="19.5" y="20.5" width="9.5" height="9" fill="#fff" stroke="#777" stroke-width="1"/><path d="M21.5 25l2 2.2 4-5" fill="none" stroke="#28a050" stroke-width="1.6"/></svg>
<svg class="a" style="left:245px;top:50px" width="24" height="30" viewBox="0 0 24 30"><path d="M1 1h22v13q0 11-11 15Q1 25 1 14z" fill="#fff" stroke="#3a72b6" stroke-width="1.5"/>
<text x="12" y="23.5" font-family="Liberation Sans" font-size="22" font-weight="bold" text-anchor="middle" fill="#3a72b6">§</text></svg>
<svg class="a" style="left:276px;top:50px" width="30" height="30" viewBox="0 0 30 30"><path d="M0.5 1.5H5l4.5 18.5h17.5" fill="none" stroke="#3a72b6" stroke-width="1.8"/>
<path d="M6.5 5.5H28l-2.5 11H9z" fill="#3a72b6"/><g fill="#fff"><path d="M10.5 6.5l1.5 2.5-1.5 2.5-1.2-2.5zM15.2 6.5l1.5 2.5-1.5 2.5-1.5-2.5zM20 6.5l1.5 2.5-1.5 2.5-1.5-2.5zM24.6 6.5l1.2 2.5-1.5 2.5-1.4-2.5zM13 11l1.5 2.5-1.5 2.5-1.5-2.5zM17.7 11l1.5 2.5-1.5 2.5-1.5-2.5zM22.4 11l1.5 2.5-1.5 2.5-1.5-2.5z"/></g>
<path d="M10 22.5h17" stroke="#3a72b6" stroke-width="2"/><circle cx="10.5" cy="26.5" r="2" fill="#3a72b6"/><circle cx="24" cy="26.5" r="2" fill="#3a72b6"/></svg>
<svg class="a" style="left:307px;top:50px" width="31" height="30" viewBox="0 0 31 30"><circle cx="14" cy="15.5" r="13" fill="none" stroke="#a8a8a8" stroke-width="2"/><path d="M22 3h7v7z" fill="#999"/><path d="M23 7l3-3" stroke="#999" stroke-width="2"/>
<text x="14" y="17.8" font-family="Liberation Serif" font-size="7" font-weight="bold" text-anchor="middle" fill="#999" letter-spacing="-0.2">volvo</text></svg>
<svg class="a" style="left:340px;top:50px" width="30" height="30" viewBox="0 0 30 30"><rect x="1" y="3" width="27" height="24" fill="#eaeaea" stroke="#c8c8c8" stroke-width="1"/><rect x="1" y="3" width="27" height="3" fill="#b8b8b8"/>
<path d="M3 9h2M7 9h2M11 9h2M15 9h2" stroke="#aaa" stroke-width="1"/><path d="M10 10v16" stroke="#ccc"/><path d="M13 13h12M13 16h12M13 19h12M13 22h12" stroke="#d2d2d2"/><path d="M22 25h4" stroke="#bbb" stroke-width="1.5"/></svg>
<svg class="a" style="left:407px;top:50px" width="26" height="30" viewBox="0 0 26 30"><path d="M0.5 1.5h14l6 6v20h-20z" fill="#fff" stroke="#777" stroke-width="1"/><path d="M14.5 1.5v6h6" fill="none" stroke="#777"/>
<path d="M3 4h6M3 7h8M3 9.5h10M3 12h10M3 14.5h8" stroke="#bbb" stroke-width="0.9"/><path d="M2.5 24l4-5 0.5 4z" fill="none" stroke="#d55" stroke-width="0.8"/>
<rect x="10.5" y="15.5" width="11.5" height="13" fill="#eee" stroke="#888" stroke-width="1"/><rect x="12" y="17" width="8.5" height="4.5" fill="#fff" stroke="#999" stroke-width="0.6"/><rect x="12" y="22.5" width="8.5" height="4.5" fill="#fff" stroke="#999" stroke-width="0.6"/>
<path d="M15 19h2.5M15 24.5h2.5" stroke="#3a72b6" stroke-width="1"/></svg>
<svg class="a" style="left:440px;top:50px" width="24" height="30" viewBox="0 0 24 30"><path d="M1.2 1.2l6.5 26.5" stroke="#666" stroke-width="2.6"/><path d="M5 2.5h17l-11 8z" fill="#3a72b6"/><path d="M5 2.5l6 8-4 0.5z" fill="#3a72b6"/></svg>
<svg class="a" style="left:475px;top:50px" width="30" height="30" viewBox="0 0 30 30"><g transform="translate(0 0.5) scale(0.93 0.965)"><path d="M2.2 22.5V15Q2.2 12.5 3.6 12L5.5 6Q6.5 3.2 10 3.2H19.5Q23 3.2 24 6L25.5 12Q27 12.5 27 15V22.5H25.9V24.5Q25.9 26 24.5 26H23.4Q22 26 22 24.5V22.5H6.9V24.5Q6.9 26 5.5 26H4Q2.6 26 2.6 24.5V22.5Z" fill="#d8432b"/><rect x="0" y="9" width="4.5" height="2.8" rx="1.3" fill="#d8432b"/><rect x="24.5" y="9" width="4.5" height="2.8" rx="1.3" fill="#d8432b"/>
<path d="M5 12.2L6.8 7Q7.6 4.8 10.5 4.8H19Q21.8 4.8 22.6 7L24 12.2Z" fill="#fff"/><ellipse cx="6.4" cy="17.2" rx="2.6" ry="1.4" fill="#fff"/><path d="M19.5 18.5l1.2-2.5M22.5 19l1.2-3.5" stroke="#fff" stroke-width="1.2"/></g>
<path d="M13.5 6.5l6 3M17.5 10.5l5-6M19 7l3 3M22 4.5l1.5 2" stroke="#d8432b" stroke-width="1.1"/></svg>
<svg class="a" style="left:507px;top:50px" width="30" height="30" viewBox="0 0 30 30"><g transform="translate(2 -2.8) scale(0.92 1.02)"><path d="M2.2 22.5V15Q2.2 12.5 3.6 12L5.5 6Q6.5 3.2 10 3.2H19.5Q23 3.2 24 6L25.5 12Q27 12.5 27 15V22.5H25.9V24.5Q25.9 26 24.5 26H23.4Q22 26 22 24.5V22.5H6.9V24.5Q6.9 26 5.5 26H4Q2.6 26 2.6 24.5V22.5Z" fill="#bdbdbd"/><rect x="0" y="9" width="4.5" height="2.8" rx="1.3" fill="#bdbdbd"/><rect x="24.5" y="9" width="4.5" height="2.8" rx="1.3" fill="#bdbdbd"/>
<path d="M5 12.2L6.8 7Q7.6 4.8 10.5 4.8H19Q21.8 4.8 22.6 7L24 12.2Z" fill="#e2e2e2"/><ellipse cx="22.3" cy="17.2" rx="2.6" ry="1.4" fill="#e8e8e8"/></g>
<path d="M0 20.5L6 13L17.5 16.5L17.5 25.5L11.5 29L0 26Z" fill="#c2c2c2"/><path d="M0 20.5L11.5 23.5L17.5 16.5M11.5 23.5V29" fill="none" stroke="#f4f4f4" stroke-width="0.8"/>
<path d="M1 22.5l1 0.3M1 24.5l1 0.3M13 25l1-1M13 27l1-1M15.5 22l1-1" stroke="#fff" stroke-width="0.8"/><path d="M6 13L17.5 16.5" stroke="#f4f4f4" stroke-width="0.8"/></svg>
<svg class="a" style="left:541px;top:50px" width="28" height="30" viewBox="0 0 28 30"><rect x="0.5" y="4.5" width="21" height="24" fill="#e8b25c"/><rect x="3" y="7" width="16" height="20" fill="#fff"/>
<path d="M7 3.5h8v3H7z" fill="#666"/><path d="M9.5 1.5h3v3h-3z" fill="#666"/>
<rect x="6" y="9.5" width="5.5" height="5" fill="#fff" stroke="#666" stroke-width="1"/><rect x="6" y="16.5" width="5.5" height="5" fill="#fff" stroke="#666" stroke-width="1"/>
<path d="M7.5 11.5l2 2 4-4M7.5 18.5l2 2 4-4" fill="none" stroke="#d8432b" stroke-width="1.4"/>
<circle cx="20.5" cy="22.5" r="6.5" fill="#d0352a"/><path d="M20.5 18v5" stroke="#fff" stroke-width="2"/><circle cx="20.5" cy="26" r="1.1" fill="#fff"/></svg>
<svg class="a" style="left:571px;top:50px" width="30" height="30" viewBox="0 0 30 30"><path d="M0.5 7l7-6h21l-7 6z" fill="#eac170"/><path d="M21.5 7l7-6v20l-7 6.5z" fill="#d9a648"/><rect x="0.5" y="7" width="21" height="20.5" fill="#e8b25c"/>
<path d="M10 1h5l-3 6v5l-2-1.5z" fill="#f7e6c4"/><path d="M8 22.5h7M9 21l0-5M13.5 21v-5M9 16l-1.2 1.5M9 16l1.2 1.5M13.5 16l-1.2 1.5M13.5 16l1.2 1.5" stroke="#fff" stroke-width="1"/></svg>
<svg class="a" style="left:608px;top:50px" width="21" height="30" viewBox="0 0 21 30"><rect x="0.5" y="0.5" width="19.5" height="28.5" rx="2.5" fill="#666"/><rect x="3" y="4" width="14.5" height="19" fill="#3a72b6" stroke="#cfe0f0" stroke-width="0.7"/><circle cx="10.25" cy="26" r="1.3" fill="#fff"/><path d="M8.5 1.8h3.5" stroke="#ccc" stroke-width="0.8"/></svg>
<svg class="a" style="left:637px;top:50px" width="28" height="30" viewBox="0 0 28 30"><rect x="0.75" y="0.75" width="19" height="26" rx="1.5" fill="#e6e6e6" stroke="#a0a0a0" stroke-width="1.5"/><rect x="2.5" y="2.5" width="14.5" height="10" fill="#fff" stroke="#8a8a8a" stroke-width="0.9"/><rect x="2.5" y="14.5" width="14.5" height="10" fill="#fff" stroke="#8a8a8a" stroke-width="0.9"/>
<ellipse cx="9.75" cy="8" rx="3.2" ry="1.3" fill="#3a72b6"/><ellipse cx="9.75" cy="20" rx="3.2" ry="1.3" fill="#3a72b6"/><circle cx="19.5" cy="21.5" r="6.6" fill="#444"/><circle cx="19.5" cy="21.5" r="4.6" fill="#a8a8a8"/><circle cx="19.5" cy="21.5" r="1.6" fill="#777"/>
<path d="M19.5 17.5v8M15.5 21.5h8M16.7 18.7l5.6 5.6M22.3 18.7l-5.6 5.6" stroke="#d5d5d5" stroke-width="0.7"/></svg>
<svg class="a" style="left:670px;top:50px" width="28" height="30" viewBox="0 0 28 30"><path d="M0.5 0.5h14.5l6.5 6.5v22h-21z" fill="#fff" stroke="#777" stroke-width="1"/><path d="M15 0.5v6.5h6.5" fill="none" stroke="#777"/>
<path d="M3 4h7M3 7.5h8M3 9.5h9" stroke="#bbb" stroke-width="0.9"/><rect x="3" y="12" width="15" height="10" fill="#fff" stroke="#7a97c5" stroke-width="1"/><path d="M3 15.5h15M3 18.5h15M13 12v10" stroke="#7a97c5" stroke-width="0.8"/>
<path d="M10 29l1-3.5 14.5-14.5 2.5 2.5-14.5 14.5z" fill="#3a72b6"/><path d="M24 12.5l2.5 2.5" stroke="#fff" stroke-width="0.8"/></svg>
<svg class="a" style="left:701px;top:50px" width="30" height="31" viewBox="0 0 30 31"><path d="M0.5 4H4L8.5 22H20" fill="none" stroke="#bdbdbd" stroke-width="1.8"/><path d="M4.6 7.5H24.5L23 19.9H7.5Z" fill="#c6c6c6"/>
<g fill="#eeeeee"><path d="M8.5 8.5l1.4 2.5-1.4 2.5-1.2-2.5zM13 8.5l1.4 2.5-1.4 2.5-1.4-2.5zM17.5 8.5l1.4 2.5-1.4 2.5-1.4-2.5zM22 8.5l1.2 2.5-1.4 2.5-1.4-2.5zM10.8 13.5l1.4 2.5-1.4 2.5-1.4-2.5zM15.3 13.5l1.4 2.5-1.4 2.5-1.4-2.5zM19.8 13.5l1.4 2.5-1.4 2.5-1.4-2.5z"/></g>
<circle cx="8.6" cy="26.9" r="1.8" fill="#bbb"/><rect x="20.6" y="19.4" width="3.9" height="10.5" fill="#c4c4c4"/><rect x="16" y="23.4" width="12.5" height="3.5" fill="#c4c4c4"/></svg>
<svg class="a" style="left:739px;top:50px" width="29" height="30" viewBox="0 0 29 30"><rect x="0.75" y="2.75" width="26.5" height="24" fill="#fff" stroke="#666" stroke-width="1.5"/><rect x="0" y="2" width="28" height="3.5" fill="#5aa97c"/>
<rect x="4" y="9" width="5" height="5" fill="none" stroke="#777"/><rect x="4" y="18" width="5" height="5" fill="none" stroke="#777"/><path d="M5 11.5l2 2 4-5M5 20.5l2 2 4-5" fill="none" stroke="#3a72b6" stroke-width="1.5"/>
<path d="M12.5 13h4M18 13h5M12.5 22h4M18 22h5" stroke="#333" stroke-width="1"/></svg>
<svg class="a" style="left:772px;top:50px" width="29" height="30" viewBox="0 0 29 30"><path d="M0.5 0.5h14.5l6.5 6.5v21h-21z" fill="#fff" stroke="#777" stroke-width="1"/><path d="M15 0.5v6.5h6.5" fill="none" stroke="#777"/>
<path d="M3 4h7M3 7.5h8M3 9.5h9" stroke="#bbb" stroke-width="0.9"/><rect x="3" y="12" width="15" height="9" fill="#fff" stroke="#7a97c5" stroke-width="1"/><path d="M3 15h15M3 18h15" stroke="#7a97c5" stroke-width="0.8"/>
<rect x="17" y="15.5" width="8" height="4" fill="#fff" stroke="#777" stroke-width="0.8"/><rect x="13.5" y="19" width="15" height="7" rx="1" fill="#6b6b6b"/><rect x="16" y="19" width="10" height="2.5" fill="#3a72b6"/><rect x="16" y="24" width="10" height="5" fill="#fff" stroke="#777" stroke-width="0.8"/></svg>
<svg class="a" style="left:804px;top:50px" width="29" height="30" viewBox="0 0 29 30"><rect x="0.5" y="3.5" width="21" height="24" fill="#e8b25c"/><rect x="3" y="6" width="16" height="20" fill="#fff"/><path d="M7 2.5h8v3H7z" fill="#666"/><path d="M9.5 0.5h3v3h-3z" fill="#666"/>
<rect x="6" y="8.5" width="5.5" height="5" fill="#fff" stroke="#666"/><rect x="6" y="15.5" width="5.5" height="5" fill="#fff" stroke="#666"/><path d="M7.5 10.5l2 2 4-4M7.5 17.5l2 2 4-4" fill="none" stroke="#d8432b" stroke-width="1.4"/>
<rect x="16" y="15.5" width="8" height="4" fill="#fff" stroke="#777" stroke-width="0.8"/><rect x="12.5" y="19" width="16" height="7" rx="1" fill="#6b6b6b"/><rect x="15" y="19" width="11" height="2.5" fill="#3a72b6"/><rect x="15" y="24" width="11" height="5" fill="#fff" stroke="#777" stroke-width="0.8"/></svg>
<svg class="a" style="left:839px;top:50px" width="26" height="30" viewBox="0 0 26 30"><circle cx="12.5" cy="14.5" r="11" fill="#fff" stroke="#666" stroke-width="2"/><path d="M12.5 7v8h7" fill="none" stroke="#3a72b6" stroke-width="2"/></svg>
<svg class="a" style="left:870px;top:50px" width="29" height="30" viewBox="0 0 29 30"><rect x="0.75" y="3.75" width="26.5" height="19" fill="#fff" stroke="#3a72b6" stroke-width="1.5"/><rect x="11.5" y="22.5" width="5" height="3" fill="#3a72b6"/><rect x="4" y="25.5" width="20" height="1.8" fill="#3a72b6"/></svg>
<svg class="a" style="left:907px;top:50px" width="30" height="30" viewBox="0 0 30 30"><rect x="0.75" y="0.75" width="22.5" height="27" fill="#fff" stroke="#888" stroke-width="1.5"/><path d="M3 4.5h18" stroke="#d94a33" stroke-width="1.8"/>
<path d="M3 8h12M3 10.5h12M17 8h4M17 10.5h4M3 13h10M17 13h4" stroke="#aaa" stroke-width="0.9"/><rect x="3" y="19" width="11" height="6" fill="none" stroke="#aaa"/>
<path d="M12 20l7-3 8 2.5v8l-7 3-8-2.5z" fill="#5c9b78"/><path d="M12 23l8 2.5 7-3M12 26l8 2.5 7-3M20 19.5v11" fill="none" stroke="#cfe6d8" stroke-width="0.8"/><path d="M19 17.5l-1 12" stroke="#777" stroke-width="1.2"/></svg>
<svg class="a" style="left:943px;top:50px" width="31" height="30" viewBox="0 0 31 30"><rect x="12" y="1" width="13" height="6.5" fill="#fff" stroke="#3a72b6" stroke-width="1.5"/><rect x="4" y="1.5" width="6" height="6" fill="#bbb"/><path d="M5.5 3.5h3M5.5 5.5h3" stroke="#777"/>
<path d="M3 8h23l1 14H2z" fill="#3a72b6"/><g fill="#fff"><rect x="6" y="10.5" width="3.5" height="2"/><rect x="11" y="10.5" width="3.5" height="2"/><rect x="16" y="10.5" width="3.5" height="2"/><rect x="21" y="10.5" width="3.5" height="2"/><rect x="6" y="14" width="3.5" height="2"/><rect x="11" y="14" width="3.5" height="2"/><rect x="16" y="14" width="3.5" height="2"/><rect x="6" y="17.5" width="3.5" height="2"/><rect x="11" y="17.5" width="3.5" height="2"/></g>
<rect x="0" y="22.5" width="17" height="6" fill="#3a72b6"/>
<path d="M14 20l7-3 9 2.5v8l-7 3-9-2.5z" fill="#5c9b78"/><path d="M14 23l9 2.5 7-3M14 26l9 2.5 7-3M23 19.5v11" fill="none" stroke="#cfe6d8" stroke-width="0.8"/><path d="M21 17.5l-1 12" stroke="#777" stroke-width="1.2"/></svg>
<svg class="a" style="left:982px;top:50px" width="30" height="30" viewBox="0 0 30 30"><path d="M25.5 14.5A11 11 0 0 0 7 6.8" fill="none" stroke="#3ba27a" stroke-width="4"/><path d="M3.2 1.8L1 13L12 10.5Z" fill="#3ba27a"/>
<path d="M3.2 14.8A11.3 11.3 0 0 0 23 22.5" fill="none" stroke="#3ba27a" stroke-width="4"/><path d="M28.8 16L26 26L17.5 17.5Z" fill="#3ba27a"/></svg>
<svg class="a" style="left:10px;top:94px" width="24" height="28" viewBox="0 0 24 28"><path d="M1 1h15l6.5 6.5v19H1z" fill="#fff" stroke="#777" stroke-width="1.3"/><path d="M16 1v6.5h6.5" fill="none" stroke="#777" stroke-width="1"/>
<path d="M4 4.5h7" stroke="#555" stroke-width="0.9"/><path d="M4 7.5h6M4 9h9" stroke="#bbb" stroke-width="0.9"/>
<rect x="4" y="12" width="15.5" height="8.5" fill="#fff" stroke="#5a86c0" stroke-width="1"/><path d="M4 14.5h15.5M4 17.5h15.5M16 12v8.5" stroke="#5a86c0" stroke-width="0.9"/><path d="M4 23.5h7" stroke="#888" stroke-width="0.9"/></svg>
<svg class="a" style="left:7px;top:130px" width="30" height="26" viewBox="0 0 30 26"><path d="M2.5 20.5V14Q2.5 11.5 4 11L6 5.5Q7 2.5 10.5 2.5H19.5Q23 2.5 24 5.5L26 11Q27.5 11.5 27.5 14V20.5H26.3V22.5Q26.3 24 24.8 24H23.6Q22.1 24 22.1 22.5V20.5H7.9V22.5Q7.9 24 6.4 24H5.2Q3.7 24 3.7 22.5V20.5Z" fill="#3a72b6"/>
<rect x="0" y="8.2" width="4.8" height="2.8" rx="1.3" fill="#3a72b6"/><rect x="25.2" y="8.2" width="4.8" height="2.8" rx="1.3" fill="#3a72b6"/>
<path d="M5.5 11.2L7.3 6.3Q8 4.2 11 4.2H19Q22 4.2 22.7 6.3L24.5 11.2Z" fill="#fff"/><ellipse cx="7.2" cy="15.8" rx="2.7" ry="1.4" fill="#fff" transform="rotate(10 7.2 15.8)"/><ellipse cx="22.8" cy="15.8" rx="2.7" ry="1.4" fill="#fff" transform="rotate(-10 22.8 15.8)"/></svg>
<svg class="a" style="left:7px;top:164px" width="30" height="28" viewBox="0 0 30 28"><rect x="0.75" y="0.75" width="27" height="21.5" fill="#fff" stroke="#8a8a8a" stroke-width="1.3"/><path d="M3 3.5h7" stroke="#555" stroke-width="1.2"/><path d="M19 3.5h4" stroke="#d33" stroke-width="1.3"/>
<path d="M4.5 6.5h19M4.5 8.5h19" stroke="#999" stroke-width="0.8"/><rect x="3" y="10.5" width="20" height="8" fill="#dce9f6" stroke="#9fbcdc" stroke-width="0.8"/>
<rect x="9.5" y="14.5" width="20" height="12.5" fill="#3a72b6" stroke="#fff" stroke-width="1"/><ellipse cx="19.5" cy="20.75" rx="3.5" ry="4.5" fill="#fff"/><path d="M11 16h2M11 25.5h2M26 16h2M26 25.5h2" stroke="#fff" stroke-width="1.4"/></svg>
<svg class="a" style="left:10px;top:199px" width="24" height="29" viewBox="0 0 24 29"><rect x="1" y="4" width="21.5" height="24" fill="#e8b25c"/><rect x="3.3" y="6.5" width="17" height="19.5" fill="#fff"/><path d="M6.5 3h10.5v3.5H6.5z" fill="#666"/><path d="M10 0.5h3.5v3h-3.5z" fill="#666"/>
<path d="M6 16.5l4 4.5 8-9" fill="none" stroke="#cc3a2b" stroke-width="2.6"/></svg>
<svg class="a" style="left:10px;top:235px" width="24" height="28" viewBox="0 0 24 28"><rect x="1.25" y="1.25" width="21" height="25" fill="#fff" stroke="#5f5f5f" stroke-width="1.5"/><rect x="1.25" y="1.25" width="21" height="2.5" fill="#3a72b6"/>
<g stroke="#444" stroke-width="1"><path d="M5 8h1M5 10.5h1M5 13h1M5 15.5h1M5 18h1M5 20.5h1M5 23h1"/></g><g stroke="#999" stroke-width="1"><path d="M8 8h10M8 10.5h10M8 13h10M8 15.5h10M8 18h10M8 20.5h10M8 23h10"/></g></svg>
<svg class="a" style="left:7px;top:272px" width="30" height="23" viewBox="0 0 30 23"><rect x="0.9" y="0.9" width="27" height="20" fill="#e5ac4c" stroke="#8a7048" stroke-width="1.3" stroke-dasharray="2 1.3"/>
<text x="3" y="16.5" font-family="Liberation Sans" font-size="13.5" font-weight="bold" fill="#fff">50</text><text x="18" y="12.5" font-family="Liberation Sans" font-size="8" font-weight="bold" fill="#fff">%</text></svg>
<svg class="a" style="left:7px;top:305px" width="30" height="28" viewBox="0 0 30 28"><rect x="7.5" y="1" width="15" height="6" fill="#fff" stroke="#555" stroke-width="1"/><rect x="0.5" y="7" width="29" height="13" rx="2.5" fill="#6b6b6b"/><rect x="6" y="6.5" width="18" height="8" rx="1" fill="#3a72b6"/><path d="M2.5 16h2" stroke="#ddd"/>
<rect x="7.5" y="15.5" width="15" height="11.5" fill="#fff" stroke="#666" stroke-width="1"/><path d="M11 21h8" stroke="#9fb5d0" stroke-width="1.5"/></svg>
<svg class="a" style="left:8px;top:340px" width="27" height="26" viewBox="0 0 27 26"><g fill="#3a72b6"><rect x="0.5" y="0.5" width="7.5" height="25" rx="1"/><rect x="9.5" y="0.5" width="7.5" height="25" rx="1"/><rect x="18.5" y="0.5" width="7.5" height="25" rx="1"/></g>
<g fill="#fff"><rect x="2.3" y="3" width="4" height="14"/><rect x="11.3" y="3" width="4" height="14"/><rect x="20.3" y="3" width="4" height="14"/></g>
<g fill="none" stroke="#fff" stroke-width="1"><circle cx="4.25" cy="21.3" r="2"/><circle cx="13.25" cy="21.3" r="2"/><circle cx="22.25" cy="21.3" r="2"/></g></svg>
<svg class="a" style="left:11px;top:374px" width="22" height="29" viewBox="0 0 22 29"><rect x="0.5" y="0.5" width="21" height="28" rx="1" fill="#3a72b6"/><rect x="2.5" y="2.5" width="17" height="5.5" fill="#fff"/><text x="18.5" y="7.3" font-family="Liberation Sans" font-size="6" text-anchor="end" fill="#222">0,00</text>
<g fill="#fff"><rect x="3" y="10" width="3" height="3"/><rect x="7.5" y="10" width="3" height="3"/><rect x="12" y="10" width="3" height="3"/><rect x="16.5" y="10" width="3" height="3"/>
<rect x="3" y="14.5" width="3" height="3"/><rect x="7.5" y="14.5" width="3" height="3"/><rect x="12" y="14.5" width="3" height="3"/>
<rect x="3" y="19" width="3" height="3"/><rect x="7.5" y="19" width="3" height="3"/><rect x="12" y="19" width="3" height="3"/>
<rect x="3" y="23.5" width="3" height="3"/><rect x="7.5" y="23.5" width="3" height="3"/><rect x="12" y="23.5" width="3" height="3"/></g><rect x="16.5" y="14.5" width="3" height="12" fill="#bbb"/></svg>
<svg class="a" style="left:814px;top:140px" width="18" height="16" viewBox="0 0 18 16"><ellipse cx="8.5" cy="8.5" rx="7" ry="4" fill="#d8473a"/><ellipse cx="8.5" cy="8.5" rx="3.5" ry="2.6" fill="#4f6fc8"/><circle cx="8.5" cy="8.5" r="1" fill="#fff"/>
<path d="M1.5 14.5L15.5 1.5" stroke="#d8473a" stroke-width="1.7"/><path d="M3 13.5L14 3" stroke="#fff" stroke-width="0.5" opacity="0.6"/></svg>
<svg class="a" style="left:814px;top:161px" width="18" height="16" viewBox="0 0 18 16"><rect x="2.75" y="0.75" width="12.5" height="8.5" fill="#fff" stroke="#2a8a5a" stroke-width="1.5"/><ellipse cx="9" cy="5" rx="4" ry="3" fill="#fff" stroke="#bfe3cf" stroke-width="0.6"/><circle cx="10" cy="4.8" r="2.3" fill="#2a8a5a"/>
<ellipse cx="5.5" cy="8" rx="3.8" ry="1.7" fill="#e4a53a" stroke="#f3d388" stroke-width="0.6"/><ellipse cx="5.3" cy="10.5" rx="3.8" ry="1.7" fill="#e4a53a" stroke="#f3d388" stroke-width="0.6"/><ellipse cx="5" cy="13" rx="3.8" ry="1.7" fill="#e4a53a" stroke="#f3d388" stroke-width="0.6"/></svg>
<svg class="a" style="left:814px;top:179px" width="18" height="16" viewBox="0 0 18 16"><rect x="2.75" y="0.75" width="12.5" height="8.5" fill="#fff" stroke="#2a8a5a" stroke-width="1.5"/><ellipse cx="9" cy="5" rx="4" ry="3" fill="#fff" stroke="#bfe3cf" stroke-width="0.6"/><circle cx="10" cy="4.8" r="2.3" fill="#2a8a5a"/>
<ellipse cx="5.5" cy="8" rx="3.8" ry="1.7" fill="#e4a53a" stroke="#f3d388" stroke-width="0.6"/><ellipse cx="5.3" cy="10.5" rx="3.8" ry="1.7" fill="#e4a53a" stroke="#f3d388" stroke-width="0.6"/><ellipse cx="5" cy="13" rx="3.8" ry="1.7" fill="#e4a53a" stroke="#f3d388" stroke-width="0.6"/></svg>
<svg class="a" style="left:814px;top:197px" width="18" height="16" viewBox="0 0 18 16"><rect x="2.75" y="0.75" width="12.5" height="8.5" fill="#fff" stroke="#2a8a5a" stroke-width="1.5"/><ellipse cx="9" cy="5" rx="4" ry="3" fill="#fff" stroke="#bfe3cf" stroke-width="0.6"/><circle cx="10" cy="4.8" r="2.3" fill="#2a8a5a"/>
<ellipse cx="5.5" cy="8" rx="3.8" ry="1.7" fill="#e4a53a" stroke="#f3d388" stroke-width="0.6"/><ellipse cx="5.3" cy="10.5" rx="3.8" ry="1.7" fill="#e4a53a" stroke="#f3d388" stroke-width="0.6"/><ellipse cx="5" cy="13" rx="3.8" ry="1.7" fill="#e4a53a" stroke="#f3d388" stroke-width="0.6"/></svg>
</body></html>
